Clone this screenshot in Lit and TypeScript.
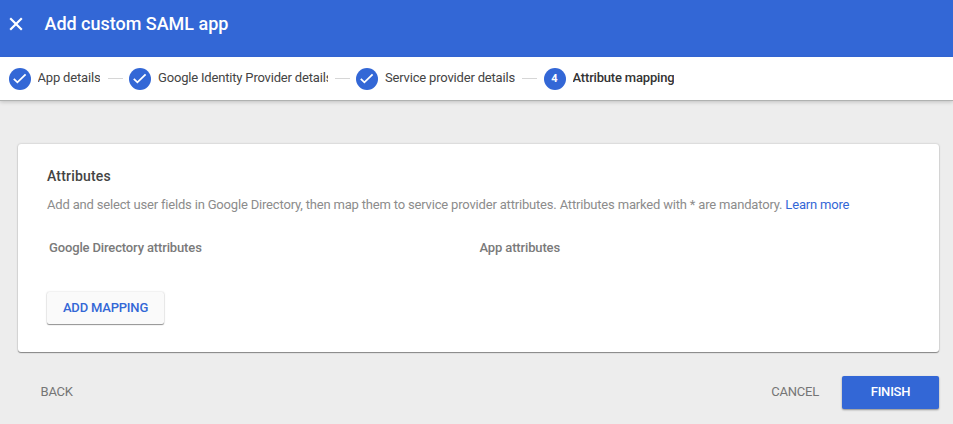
import { LitElement, html, css } from "lit";
import { customElement, property } from "lit/decorators.js";

@customElement("wizard-step")
class WizardStep extends LitElement {
  @property({ type: Number }) index = 1;
  @property({ type: Boolean }) done = false;
  @property() label = "";

  static styles = css`
    :host { display: flex; align-items: center; min-width: 0; }
    .badge { width: 22px; height: 22px; flex: none; border-radius: 50%; background: #3367d6; color: #fff; display: flex; align-items: center; justify-content: center; font-size: 11px; font-weight: 700; letter-spacing: 0; }
    .badge svg { display: block; width: 22px; height: 22px; }
    .label { margin: 0 0 2px 7px; overflow: hidden; white-space: nowrap; color: #444; line-height: 20px; }
    .current { font-weight: 500; color: #333; }
  `;

  render() {
    return html`
      <span class="badge">
        ${this.done
          ? html`<svg viewBox="0 0 22 22"><path d="M4.8 10.9l3.6 3.4 8.2-8" fill="none" stroke="#fff" stroke-width="1.8" /></svg>`
          : this.index}
      </span>
      <span class="label ${this.done ? "" : "current"}">${this.label}</span>
    `;
  }
}

@customElement("app-root")
class AppRoot extends LitElement {
  static styles = css`
    :host { display: flex; flex-direction: column; height: 424px; background: #ededed; font: 13px/20px Roboto, sans-serif; letter-spacing: -.18px; overflow: hidden; }
    * { box-sizing: border-box; }
    .top { height: 57px; flex: none; background: #3367d6; color: #fff; display: flex; align-items: flex-start; padding: 12px 9px; }
    .close { width: 14px; height: 14px; margin-top: 5px; }
    .title { margin: 0 0 0 21.5px; font-size: 18px; line-height: 24px; font-weight: 500; letter-spacing: -.02px; }
    .steps { height: 43px; flex: none; background: #fff; display: flex; align-items: center; padding-left: 8.5px; box-shadow: 0 1px 0 #b0b2b1, 0 2px 4px rgba(0, 0, 0, .2); }
    .rule { width: 15px; height: 1px; background: #d6d6d6; margin: 0 6.5px; flex: none; }
    .s1 { width: 92.5px; }
    .s2 { width: 199px; }
    .s3 { width: 159.5px; }
    .s4 { width: 140px; }
    .card { margin: 44px 14.5px 0 18px; height: 208px; flex: none; background: #fff; border-radius: 3px; padding: 22px 29px; box-shadow: 0 1px 1px rgba(0, 0, 0, .4), 0 0 2px rgba(0, 0, 0, .25); }
    .heading { margin: 0; font-size: 14px; line-height: 20px; font-weight: 500; letter-spacing: .18px; color: #444; }
    .text { margin: 9px 0 0; color: #8c8c8c; white-space: nowrap; }
    .link { color: #3367d6; text-decoration: none; }
    .columns { display: grid; grid-template-columns: 430.5px 1fr; margin: 23px 0 0 2px; font-weight: 500; letter-spacing: -.14px; color: #7a7a7a; }
    .button { border: 0; margin: 0; padding: 0; font: 500 13px/20px Roboto, sans-serif; letter-spacing: -.2px; border-radius: 2px; background: none; color: #757575; }
    .add { display: block; margin-top: 34px; width: 117px; height: 32px; background: #fafafa; color: #3367d6; box-shadow: 0 1px 1px rgba(0, 0, 0, .4), 0 0 2px rgba(0, 0, 0, .2); }
    .footer { display: flex; align-items: center; margin: 24px 14px 0 40.5px; height: 33px; flex: none; }
    .plain { font-weight: 400; padding-bottom: 2px; }
    .cancel { margin-left: auto; }
    .finish { margin-left: 23px; width: 97px; height: 33px; padding-bottom: 2px; background: #3367d6; color: #fff; box-shadow: 0 1px 2px rgba(0, 0, 0, .4); }
  `;

  render() {
    return html`
      <header class="top">
        <svg class="close" viewBox="0 0 14 14"><path d="M1.2 1.2l11.6 11.6M12.8 1.2L1.2 12.8" stroke="#fff" stroke-width="2.2" /></svg>
        <h1 class="title">Add custom SAML app</h1>
      </header>
      <nav class="steps">
        <wizard-step class="s1" done label="App details"></wizard-step>
        <span class="rule"></span>
        <wizard-step class="s2" done label="Google Identity Provider details"></wizard-step>
        <span class="rule"></span>
        <wizard-step class="s3" done label="Service provider details"></wizard-step>
        <span class="rule"></span>
        <wizard-step class="s4" index="4" label="Attribute mapping"></wizard-step>
      </nav>
      <main class="card">
        <h2 class="heading">Attributes</h2>
        <p class="text">Add and select user fields in Google Directory, then map them to service provider attributes. Attributes marked with * are mandatory. <a class="link" href="#">Learn more</a></p>
        <div class="columns"><span>Google Directory attributes</span><span>App attributes</span></div>
        <button class="button add">ADD MAPPING</button>
      </main>
      <footer class="footer">
        <button class="button plain">BACK</button>
        <button class="button plain cancel">CANCEL</button>
        <button class="button finish">FINISH</button>
      </footer>
    `;
  }
}
